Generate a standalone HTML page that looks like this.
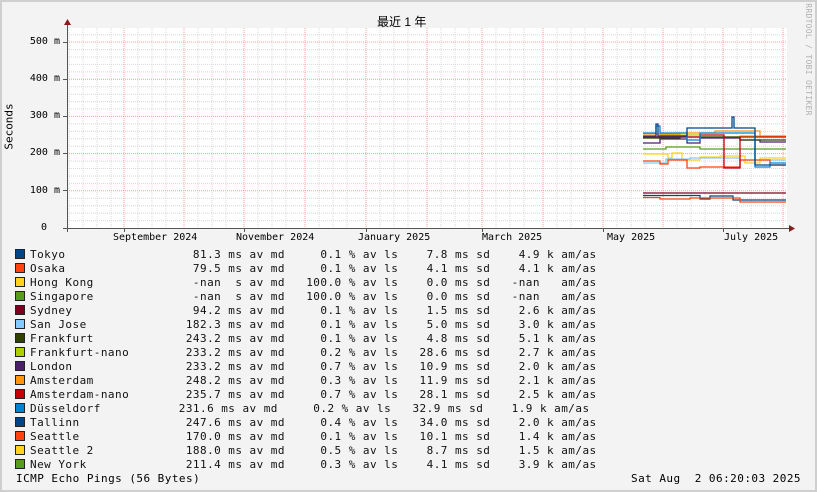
<!DOCTYPE html>
<html><head><meta charset="utf-8"><style>
body{margin:0;padding:0}
#w{position:relative;width:817px;height:492px;background:#f3f3f3;box-shadow:inset 0 0 0 2px #cfcfcf;overflow:hidden;font-family:"DejaVu Sans Mono","Liberation Mono",monospace;color:#000}
pre{margin:0;font-family:"DejaVu Sans Mono","Liberation Mono",monospace;font-size:11px;letter-spacing:0.46px;line-height:14px;position:absolute;left:30px;top:248px;color:#111}
.sw{position:absolute;left:15px;width:8px;height:8px;border:1px solid #222}
.t{position:absolute;font-size:10px;white-space:nowrap}
</style></head><body><div id="w">
<svg width="817" height="492" style="position:absolute;left:0;top:0">
<rect x="67" y="28" width="720" height="200" fill="#fff"/>
<g stroke="#d8d8d8" stroke-width="1" stroke-dasharray="1,1">
<path d="M69 28V228M83 28V228M97 28V228M111 28V228M138 28V228M152 28V228M166 28V228M198 28V228M212 28V228M226 28V228M258 28V228M272 28V228M286 28V228M319 28V228M333 28V228M347 28V228M380 28V228M394 28V228M408 28V228M441 28V228M455 28V228M469 28V228M496 28V228M510 28V228M524 28V228M557 28V228M571 28V228M585 28V228M617 28V228M631 28V228M645 28V228M677 28V228M691 28V228M705 28V228M737 28V228M751 28V228M765 28V228"/>
<path d="M67 220.6H787M67 213.1H787M67 205.7H787M67 198.3H787M67 183.4H787M67 176H787M67 168.5H787M67 161.1H787M67 146.2H787M67 138.8H787M67 131.4H787M67 123.9H787M67 109H787M67 101.6H787M67 94.2H787M67 86.8H787M67 71.9H787M67 64.4H787M67 57H787M67 49.6H787M67 34.7H787"/>
</g>
<g stroke="#f2a0a0" stroke-width="1" stroke-dasharray="1,1">
<path d="M124 28V228M184 28V228M244 28V228M305 28V228M366 28V228M427 28V228M482 28V228M543 28V228M603 28V228M663 28V228M723 28V228M783 28V228"/>
<path d="M67 190.8H787M67 153.6H787M67 116.4H787M67 79.2H787M67 42H787"/>
</g>
<g stroke="#555" stroke-width="1">
<path d="M67.5 24V232M63 228.5H790"/>
<path d="M124.5 228V232M244.5 228V232M366.5 228V232M482.5 228V232M603.5 228V232M723.5 228V232"/>
<path d="M63 42.5H67M63 79.5H67M63 116.5H67M63 153.5H67M63 190.5H67"/>
</g>
<path d="M64 25L67.5 19L71 25Z" fill="#8b1a1a"/>
<path d="M789 225L795 228.5L789 232Z" fill="#8b1a1a"/>
<g fill="none" stroke-width="1.3">
<path stroke="#7e0021" d="M643 193H786"/>
<path stroke="#004586" d="M643 195.5H700V199H710V196H733V200H786"/>
<path stroke="#ff420e" d="M643 197.5H660V199H690V198H740V202H786"/>
<path stroke="#579d1c" d="M643 149H666V147H700V149H786"/>
<path stroke="#ffd320" d="M643 154H668V158H672V153H682V160H700V157H720V156H745V163H760V158H786"/>
<path stroke="#83caff" d="M643 163H666V159H690V158H740V160H786"/>
<path stroke="#ff420e" d="M643 161H660V164H668V160H687V168H700V167H740V160H770V165H786"/>
<path stroke="#4b1f6f" d="M643 143H660V139H687V143H700V138H740V140H760V142H786"/>
<path stroke="#aecf00" d="M643 137H660V135H700V137H740V136H786"/>
<path stroke="#314004" d="M643 138H680V137H740V140H786"/>
<path stroke="#ff950e" d="M643 134H680V133H715V131H760V136H786"/>
<path stroke="#c5000b" d="M643 137H700V135H724V168H740V137H786"/>
<path stroke="#0084d1" d="M643 133H656V126H660V133H687V140H700V133H755V167H770V163H786"/>
<path stroke="#004586" d="M643 136H656V124H658V136H687V128H732V117H734V128H755V165H786"/>
</g>
</svg>
<div class="t" style="left:377px;top:13px;font-size:12px;font-family:'Liberation Sans','Noto Sans CJK SC',sans-serif">最近 1 年</div>
<div class="t" style="left:-14px;top:120px;font-size:11px;transform:rotate(-90deg)">Seconds</div>
<div class="t" style="left:752px;top:55px;font-size:8px;color:#b0b0b0;transform:rotate(90deg);letter-spacing:.3px">RRDTOOL / TOBI OETIKER</div>
<div class="t" style="right:757px;top:36px;text-align:right">500 m</div>
<div class="t" style="right:757px;top:73px">400 m</div>
<div class="t" style="right:757px;top:110px">300 m</div>
<div class="t" style="right:757px;top:147px">200 m</div>
<div class="t" style="right:757px;top:185px">100 m</div>
<div class="t" style="left:41px;top:222px">0</div>
<div class="t" style="left:113px;top:232px">September 2024</div>
<div class="t" style="left:236px;top:232px">November 2024</div>
<div class="t" style="left:358px;top:232px">January 2025</div>
<div class="t" style="left:482px;top:232px">March 2025</div>
<div class="t" style="left:607px;top:232px">May 2025</div>
<div class="t" style="left:724px;top:232px">July 2025</div>
<div class="sw" style="top:249px;background:#004586"></div>
<div class="sw" style="top:263px;background:#ff420e"></div>
<div class="sw" style="top:277px;background:#ffd320"></div>
<div class="sw" style="top:291px;background:#579d1c"></div>
<div class="sw" style="top:305px;background:#7e0021"></div>
<div class="sw" style="top:319px;background:#83caff"></div>
<div class="sw" style="top:333px;background:#314004"></div>
<div class="sw" style="top:347px;background:#aecf00"></div>
<div class="sw" style="top:361px;background:#4b1f6f"></div>
<div class="sw" style="top:375px;background:#ff950e"></div>
<div class="sw" style="top:389px;background:#c5000b"></div>
<div class="sw" style="top:403px;background:#0084d1"></div>
<div class="sw" style="top:417px;background:#004586"></div>
<div class="sw" style="top:431px;background:#ff420e"></div>
<div class="sw" style="top:445px;background:#ffd320"></div>
<div class="sw" style="top:459px;background:#579d1c"></div>
<pre>Tokyo                  81.3 ms av md     0.1 % av ls    7.8 ms sd    4.9 k am/as
Osaka                  79.5 ms av md     0.1 % av ls    4.1 ms sd    4.1 k am/as
Hong Kong              -nan  s av md   100.0 % av ls    0.0 ms sd   -nan   am/as
Singapore              -nan  s av md   100.0 % av ls    0.0 ms sd   -nan   am/as
Sydney                 94.2 ms av md     0.1 % av ls    1.5 ms sd    2.6 k am/as
San Jose              182.3 ms av md     0.1 % av ls    5.0 ms sd    3.0 k am/as
Frankfurt             243.2 ms av md     0.1 % av ls    4.8 ms sd    5.1 k am/as
Frankfurt-nano        233.2 ms av md     0.2 % av ls   28.6 ms sd    2.7 k am/as
London                233.2 ms av md     0.7 % av ls   10.9 ms sd    2.0 k am/as
Amsterdam             248.2 ms av md     0.3 % av ls   11.9 ms sd    2.1 k am/as
Amsterdam-nano        235.7 ms av md     0.7 % av ls   28.1 ms sd    2.5 k am/as
Düsseldorf           231.6 ms av md     0.2 % av ls   32.9 ms sd    1.9 k am/as
Tallinn               247.6 ms av md     0.4 % av ls   34.0 ms sd    2.0 k am/as
Seattle               170.0 ms av md     0.1 % av ls   10.1 ms sd    1.4 k am/as
Seattle 2             188.0 ms av md     0.5 % av ls    8.7 ms sd    1.5 k am/as
New York              211.4 ms av md     0.3 % av ls    4.1 ms sd    3.9 k am/as</pre>
<div class="t" style="left:16px;top:472px;font-size:11px;letter-spacing:.46px">ICMP Echo Pings (56 Bytes)</div>
<div class="t" style="right:16px;top:472px;font-size:11px;letter-spacing:.46px;white-space:pre">Sat Aug  2 06:20:03 2025</div>
</div></body></html>
